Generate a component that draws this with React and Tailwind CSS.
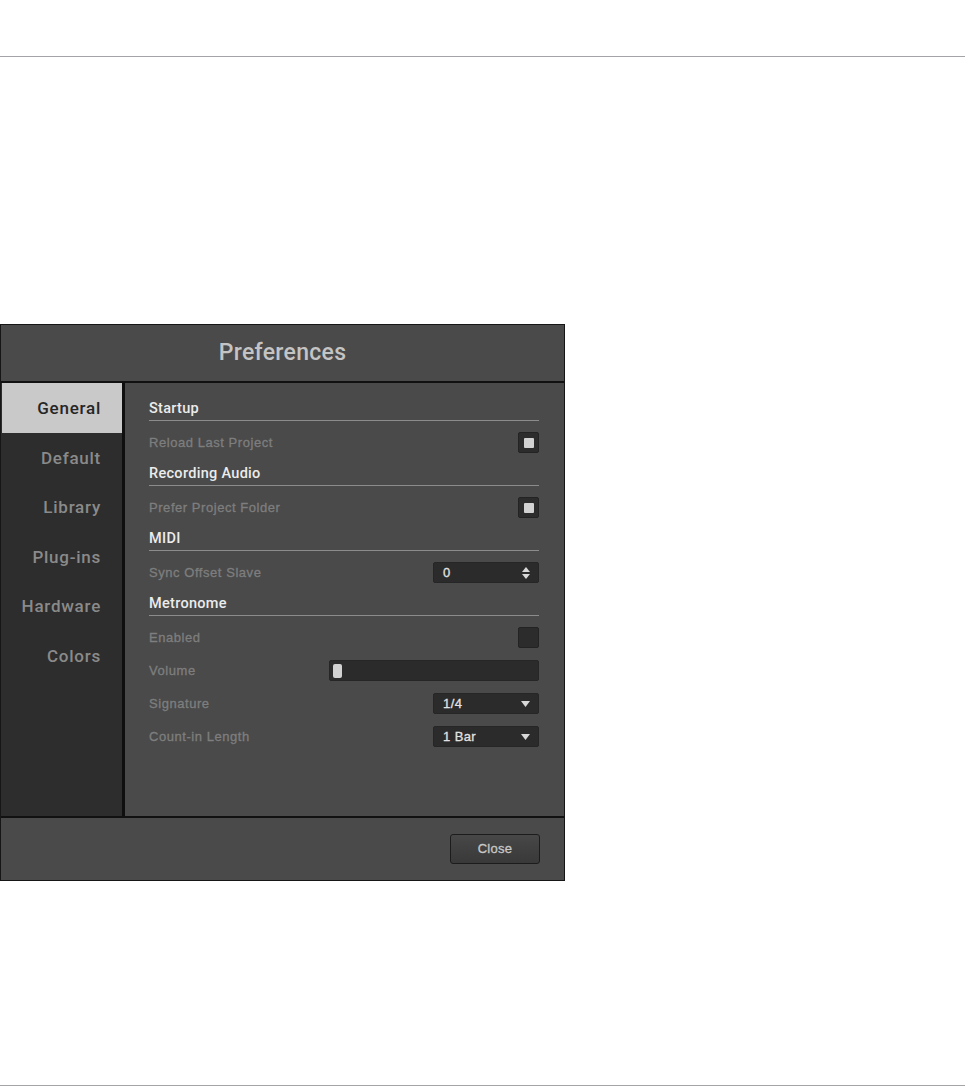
import React from "react";

const font = { fontFamily: '"Liberation Sans", Arial, sans-serif' };
const medium = { fontFamily: 'Roboto, "Liberation Sans", Arial, sans-serif' };

function Heading({ children }) {
  return (
    <div className="pt-[6px] pb-[3px] border-b border-[#8c8c8c]">
      <div className="text-[14.5px] leading-[17px] font-medium tracking-[0.3px] text-[#ececec]" style={medium}>
        {children}
      </div>
    </div>
  );
}

function Row({ label, first, children }) {
  return (
    <div className={`h-[33px] flex items-center justify-between ${first ? "mt-[5px]" : ""}`}>
      <span className="text-[13px] tracking-[0.55px] text-[#7e7e7e]" style={{ ...font, WebkitTextStroke: "0.3px #7e7e7e" }}>
        {label}
      </span>
      {children}
    </div>
  );
}

function Checkbox({ checked }) {
  return (
    <div className="w-[21px] h-[21px] rounded-[2px] bg-[#2c2c2c] border border-[#232323] flex items-center justify-center">
      {checked && <div className="w-[10px] h-[10px] rounded-[1px] bg-[#d2d2d2]" />}
    </div>
  );
}

function Dropdown({ value }) {
  return (
    <div className="w-[106px] h-[21px] rounded-[2px] bg-[#2b2b2b] border border-[#262626] flex items-center justify-between pl-[9px] pr-[8px]">
      <span className="text-[13px] tracking-[0.4px] text-[#e2e2e2]" style={{ ...font, WebkitTextStroke: "0.3px #e2e2e2" }}>
        {value}
      </span>
      <svg width="9" height="6" viewBox="0 0 9 6">
        <path d="M0 0 H9 L4.5 6 Z" fill="#d8d8d8" />
      </svg>
    </div>
  );
}

function Spinbox({ value }) {
  return (
    <div className="w-[106px] h-[21px] rounded-[2px] bg-[#2b2b2b] border border-[#262626] flex items-center justify-between pl-[9px] pr-[8px]">
      <span className="text-[13px] text-[#e2e2e2]" style={{ ...font, WebkitTextStroke: "0.3px #e2e2e2" }}>
        {value}
      </span>
      <svg width="8" height="12" viewBox="0 0 8 12">
        <path d="M0 5 L4 0 L8 5 Z" fill="#d8d8d8" />
        <path d="M0 7 L4 12 L8 7 Z" fill="#d8d8d8" />
      </svg>
    </div>
  );
}

export default function App() {
  const tabs = ["General", "Default", "Library", "Plug-ins", "Hardware", "Colors"];

  return (
    <div className="w-[965px] h-[1086px] bg-white flex flex-col" style={font}>
      <div className="h-[56px] shrink-0" />
      <div className="h-px bg-[#a3a3a8] shrink-0" />
      <div className="h-[267px] shrink-0" />

      {/* Preferences dialog */}
      <div className="w-[565px] h-[557px] shrink-0 border border-[#161616] bg-[#4a4a4a] flex flex-col">
        <div className="h-[58px] shrink-0 border-b-2 border-[#111] flex items-center justify-center">
          <span className="text-[23px] font-medium tracking-[0.3px] text-[#c4c4c4]" style={medium}>
            Preferences
          </span>
        </div>

        <div className="flex flex-1 min-h-0">
          <div className="w-[124px] shrink-0 bg-[#2d2d2d] border-r-[3px] border-[#0f0f0f] flex flex-col pl-px">
            {tabs.map((t, i) => (
              <div
                key={t}
                className={`h-[49.5px] flex items-center justify-end pr-[21px] pt-[2px] text-[17px] font-medium tracking-[0.75px] ${
                  i === 0 ? "bg-[#c9c9c9] text-[#262626]" : "text-[#8a8a8a]"
                }`}
                style={medium}
              >
                {t}
              </div>
            ))}
          </div>

          <div className="flex-1 pl-[24px] pr-[25px] pt-[11px]">
            <Heading>Startup</Heading>
            <Row label="Reload Last Project" first>
              <Checkbox checked />
            </Row>
            <Heading>Recording Audio</Heading>
            <Row label="Prefer Project Folder" first>
              <Checkbox checked />
            </Row>
            <Heading>MIDI</Heading>
            <Row label="Sync Offset Slave" first>
              <Spinbox value="0" />
            </Row>
            <Heading>Metronome</Heading>
            <Row label="Enabled" first>
              <Checkbox />
            </Row>
            <Row label="Volume">
              <div className="w-[210px] h-[21px] rounded-[2px] bg-[#2b2b2b] border border-[#262626] flex items-center pl-[3px]">
                <div className="w-[9px] h-[14px] rounded-[2px] bg-[#d2d2d2]" />
              </div>
            </Row>
            <Row label="Signature">
              <Dropdown value="1/4" />
            </Row>
            <Row label="Count-in Length">
              <Dropdown value="1 Bar" />
            </Row>
          </div>
        </div>

        <div className="h-[64px] shrink-0 border-t-2 border-[#111] flex items-center justify-end pr-[24px]">
          <button
            className="w-[90px] h-[30px] mt-[-1px] rounded-[3px] border border-[#1c1c1c] bg-gradient-to-b from-[#474747] to-[#393939] text-[13px] tracking-[0.3px] text-[#c8c8c8]"
            style={{ WebkitTextStroke: "0.3px #c8c8c8" }}
          >
            Close
          </button>
        </div>
      </div>

      <div className="flex-1" />
      <div className="h-px bg-[#a3a3a8] shrink-0" />
    </div>
  );
}
